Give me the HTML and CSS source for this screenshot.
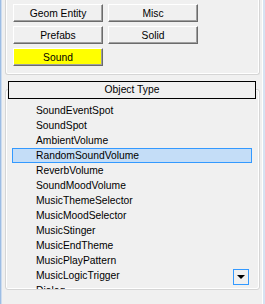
FILE: index.html
```html
<!DOCTYPE html>
<html lang="en">
<head>
  <meta charset="UTF-8">
  <title>Entity Browser</title>
  <link rel="stylesheet" href="styles.css">
</head>
<body>
  <!-- Category buttons -->
  <section class="category-panel">
    <div class="button-grid">
      <button class="cat-btn">Geom Entity</button>
      <button class="cat-btn">Misc</button>
      <button class="cat-btn">Prefabs</button>
      <button class="cat-btn">Solid</button>
      <button class="cat-btn active">Sound</button>
    </div>
  </section>

  <!-- Object type list -->
  <section class="type-panel">
    <div class="type-header">Object Type</div>
    <ul class="type-list">
      <li>SoundEventSpot</li>
      <li>SoundSpot</li>
      <li>AmbientVolume</li>
      <li class="selected">RandomSoundVolume</li>
      <li>ReverbVolume</li>
      <li>SoundMoodVolume</li>
      <li>MusicThemeSelector</li>
      <li>MusicMoodSelector</li>
      <li>MusicStinger</li>
      <li>MusicEndTheme</li>
      <li>MusicPlayPattern</li>
      <li>MusicLogicTrigger</li>
      <li>Dialog</li>
    </ul>
    <div class="scroll-btn"></div>
  </section>
</body>
</html>
```

FILE: styles.css
```css
/* Reset */
* {
  margin: 0;
  padding: 0;
  box-sizing: border-box;
}

body {
  width: 265px;
  height: 304px;
  overflow: hidden;
  background-color: #f0f0f0;
  font-family: 'Liberation Sans', Arial, sans-serif;
  font-size: 10.3px;
  color: #000;
  padding-left: 5px;
  padding-right: 5px;
  box-shadow: inset 1px 0 #9dbde4, inset 2px 0 #cddcef, inset -2px 0 #d6e3f2, inset -3px 0 #ffffff;
}

/* Category panel */
.category-panel {
  border: 1px solid #d5d5d5;
  border-top: none;
  border-radius: 0 0 3px 3px;
  box-shadow: inset 1px 0 #fff, inset -1px 0 #fff, inset 0 -1px #fff;
  padding: 4px 7px 8px;
  height: 75px;
}

.button-grid {
  display: grid;
  grid-template-columns: 90px 90px;
  grid-auto-rows: 18px;
  column-gap: 5px;
  row-gap: 4px;
}

.cat-btn {
  font-family: inherit;
  font-size: 10.3px;
  color: #000;
  background-color: #f0f0f0;
  border: 1px solid;
  border-color: #ffffff #6b6b6b #6b6b6b #ffffff;
  box-shadow: inset -1px -1px #a0a0a0;
}

.cat-btn.active {
  background-color: #ffff00;
}

/* Object type panel */
.type-panel {
  position: relative;
  margin-top: 14px;
  height: 201px;
  border: 1px solid #d5d5d5;
  border-radius: 3px;
  box-shadow: inset 1px 1px #fff, inset -1px -1px #fff;
}

.type-header {
  height: 18px;
  margin: -9px 3px 0 2px;
  border: 1px solid #000;
  background-color: #f0f0f0;
  text-align: center;
  line-height: 16px;
}

.type-list {
  list-style: none;
  margin: 4px 7px 0 6px;
  height: 186px;
  overflow: hidden;
}

.type-list li {
  height: 15px;
  line-height: 14px;
  padding-left: 23px;
  border: 1px solid transparent;
}

.type-list li.selected {
  background-color: #c4ddf7;
  border-color: #3399ff;
}

/* Scroll down arrow */
.scroll-btn {
  position: absolute;
  right: 10px;
  bottom: 4px;
  width: 16px;
  height: 16px;
  border: 1px solid #3399ff;
  background-color: #f0f0f0;
}

.scroll-btn::after {
  content: "";
  position: absolute;
  left: 3px;
  top: 5px;
  border-left: 4px solid transparent;
  border-right: 4px solid transparent;
  border-top: 4px solid #000;
}
```
